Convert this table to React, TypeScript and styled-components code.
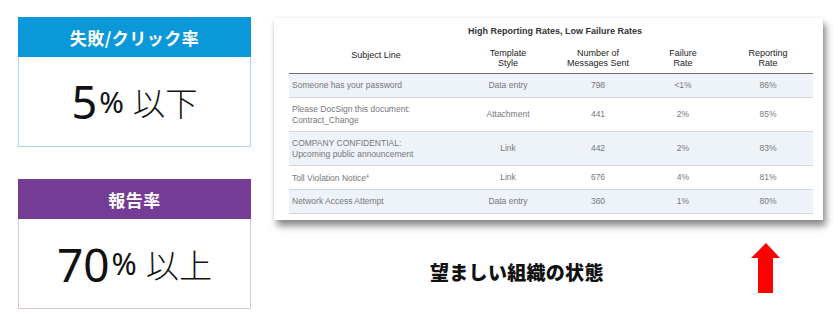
import React from 'react';
import styled, { createGlobalStyle } from 'styled-components';

const GlobalStyle = createGlobalStyle`
    body {
        margin: 0;
        background: #ffffff;
        font-family: 'Noto Sans CJK JP', 'Noto Sans', sans-serif;
    }
`;

type Tone = 'blue' | 'purple';

const tones = {
    blue: { head: '#0a98d8', border: '#a9d9f1' },
    purple: { head: '#743c94', border: '#d9c6e4' },
};

type Row = {
    subject: React.ReactNode;
    style: string;
    sent: string;
    failure: string;
    reporting: string;
    tall?: boolean;
};

const rows: Row[] = [
    { subject: 'Someone has your password', style: 'Data entry', sent: '798', failure: '<1%', reporting: '86%' },
    {
        subject: (
            <>
                Please DocSign this document:
                <br />
                Contract_Change
            </>
        ),
        style: 'Attachment',
        sent: '441',
        failure: '2%',
        reporting: '85%',
        tall: true,
    },
    {
        subject: (
            <>
                COMPANY CONFIDENTIAL:
                <br />
                Upcoming public announcement
            </>
        ),
        style: 'Link',
        sent: '442',
        failure: '2%',
        reporting: '83%',
        tall: true,
    },
    {
        subject: (
            <>
                Toll Violation Notice<sup>4</sup>
            </>
        ),
        style: 'Link',
        sent: '676',
        failure: '4%',
        reporting: '81%',
    },
    { subject: 'Network Access Attempt', style: 'Data entry', sent: '360', failure: '1%', reporting: '80%' },
];

const Page = styled.div`
    width: 838px;
    height: 334px;
    display: grid;
    grid-template-columns: 233px 1fr;
    column-gap: 23px;
    padding: 17px 0 0 18px;
    box-sizing: border-box;
`;

const LeftColumn = styled.div`
    display: flex;
    flex-direction: column;
    gap: 32px;
`;

const Card = styled.div<{ $tone: Tone }>`
    border: 1px solid ${p => tones[p.$tone].border};
    border-top: none;
    display: flex;
    flex-direction: column;
`;

const CardHead = styled.div<{ $tone: Tone }>`
    background: ${p => tones[p.$tone].head};
    height: 40px;
    margin: 0 -1px;
    display: flex;
    align-items: center;
    justify-content: center;
    color: #ffffff;
    font-weight: 700;
    font-size: 17px;
    letter-spacing: 0.5px;
`;

const CardBody = styled.div`
    height: 89px;
    display: flex;
    align-items: center;
    justify-content: center;
    color: #111111;
`;

const BigNumber = styled.span<{ $size: number }>`
    font-family: 'Noto Sans', sans-serif;
    font-weight: 400;
    font-size: ${p => p.$size}px;
    line-height: 1;
`;

const Percent = styled.span<{ $size: number }>`
    font-family: 'Noto Sans', sans-serif;
    font-size: ${p => p.$size}px;
    margin-left: 2px;
`;

const Suffix = styled.span<{ $size: number }>`
    font-family: 'Noto Sans CJK JP', sans-serif;
    font-weight: 300;
    font-size: ${p => p.$size}px;
    margin-left: 9px;
`;

const RightColumn = styled.div`
    display: flex;
    flex-direction: column;
    padding-top: 1px;
`;

const TableCard = styled.div`
    width: 549px;
    height: 202px;
    box-sizing: border-box;
    padding: 8px 10px 0 15px;
    background: #ffffff;
    box-shadow: 3px 6px 7px rgba(0, 0, 0, 0.45), 0 0 4px rgba(0, 0, 0, 0.08);
    font-family: 'Liberation Sans', Arial, sans-serif;
`;

const TableTitle = styled.div`
    text-align: center;
    font-weight: 700;
    font-size: 9px;
    line-height: 11px;
    color: #333333;
    margin-bottom: 11px;
    padding-left: 8px;
`;

const Table = styled.table`
    width: 524px;
    border-collapse: collapse;
    table-layout: fixed;
`;

const Th = styled.th<{ $w: number; $single?: boolean }>`
    width: ${p => p.$w}px;
    font-weight: 400;
    font-size: 9px;
    line-height: 10px;
    color: #222222;
    text-align: center;
    vertical-align: top;
    padding: ${p => (p.$single ? '2px' : '0')} 0 5px;
    height: ${p => (p.$single ? '18px' : '20px')};
    border-bottom: 1px solid #6f6f6f;
`;

const Tr = styled.tr<{ $shade: boolean }>`
    background: ${p => (p.$shade ? '#eef3fa' : '#ffffff')};
    border-bottom: 1px solid #d3d6da;
`;

const Td = styled.td<{ $left?: boolean; $tall?: boolean }>`
    font-size: 8.5px;
    line-height: 11px;
    color: #777777;
    text-align: ${p => (p.$left ? 'left' : 'center')};
    padding: 0 0 0 ${p => (p.$left ? '3px' : '0')};
    height: ${p => (p.$tall ? '33px' : '23px')};
    vertical-align: middle;

    sup {
        font-size: 5px;
        vertical-align: 3px;
    }
`;

const BottomRow = styled.div`
    display: flex;
    align-items: flex-start;
    margin-top: 23px;
`;

const Caption = styled.div`
    margin: 15px 0 0 156px;
    font-weight: 900;
    font-size: 19px;
    color: #111111;
    letter-spacing: 0.3px;
`;

const ArrowWrap = styled.div`
    margin-left: 147px;
    width: 30px;
    height: 50px;
`;

const StatCard = ({ tone, title, value, suffix, size }: { tone: Tone; title: string; value: string; suffix: string; size: number }) => (
    <Card $tone={tone}>
        <CardHead $tone={tone}>{title}</CardHead>
        <CardBody>
            <BigNumber $size={size}>{value}</BigNumber>
            <Percent $size={size * 0.66}>%</Percent>
            <Suffix $size={size * 0.72}>{suffix}</Suffix>
        </CardBody>
    </Card>
);

const App = () => (
    <>
        <GlobalStyle />
        <Page>
            <LeftColumn>
                <StatCard tone="blue" title="失敗/クリック率" value="5" suffix="以下" size={45} />
                <StatCard tone="purple" title="報告率" value="70" suffix="以上" size={46} />
            </LeftColumn>
            <RightColumn>
                <TableCard>
                    <TableTitle>High Reporting Rates, Low Failure Rates</TableTitle>
                    <Table>
                        <thead>
                            <tr>
                                <Th $w={174} $single>
                                    Subject Line
                                </Th>
                                <Th $w={90}>
                                    Template
                                    <br />
                                    Style
                                </Th>
                                <Th $w={90}>
                                    Number of
                                    <br />
                                    Messages Sent
                                </Th>
                                <Th $w={80}>
                                    Failure
                                    <br />
                                    Rate
                                </Th>
                                <Th $w={90}>
                                    Reporting
                                    <br />
                                    Rate
                                </Th>
                            </tr>
                        </thead>
                        <tbody>
                            {rows.map((r, i) => (
                                <Tr key={r.sent} $shade={i % 2 === 0}>
                                    <Td $left $tall={r.tall}>
                                        {r.subject}
                                    </Td>
                                    <Td $tall={r.tall}>{r.style}</Td>
                                    <Td $tall={r.tall}>{r.sent}</Td>
                                    <Td $tall={r.tall}>{r.failure}</Td>
                                    <Td $tall={r.tall}>{r.reporting}</Td>
                                </Tr>
                            ))}
                        </tbody>
                    </Table>
                </TableCard>
                <BottomRow>
                    <Caption>望ましい組織の状態</Caption>
                    <ArrowWrap>
                        <svg width="30" height="50" viewBox="0 0 30 50">
                            <polygon points="15,0 29,15 22,15 22,50 7,50 7,15 0,15" fill="#ff0000" />
                        </svg>
                    </ArrowWrap>
                </BottomRow>
            </RightColumn>
        </Page>
    </>
);

export default App;
